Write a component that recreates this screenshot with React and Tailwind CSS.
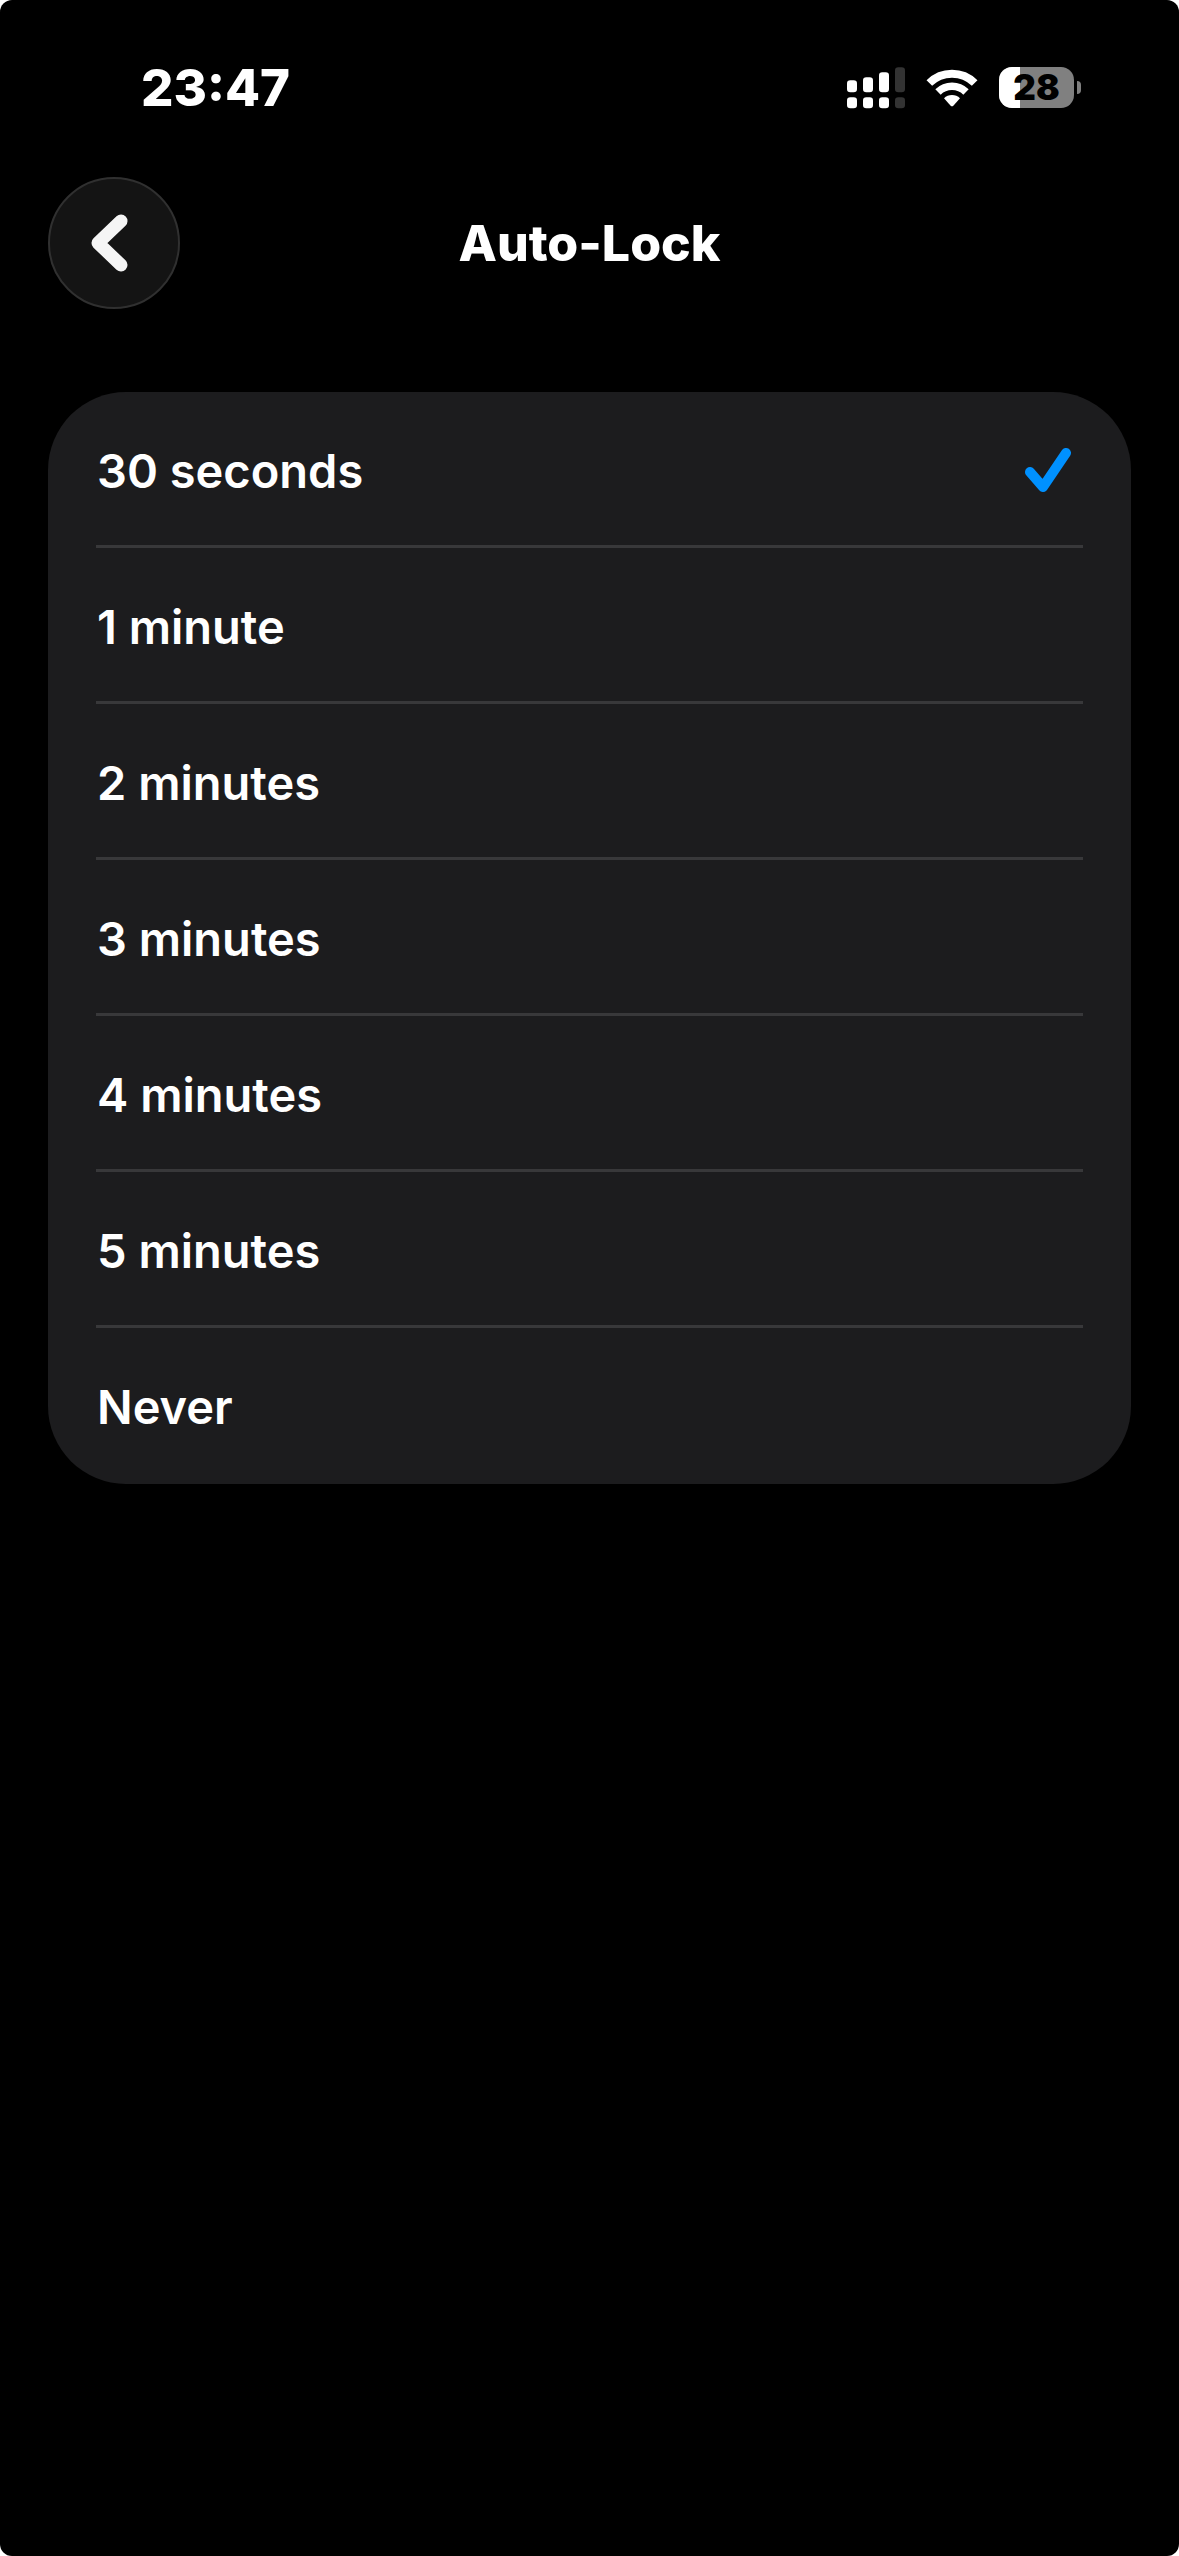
import { useState } from 'react';

const OPTIONS = ['30 seconds', '1 minute', '2 minutes', '3 minutes', '4 minutes', '5 minutes', 'Never'];

function SignalIcon() {
    return (
        <svg width="58" height="42" viewBox="0 0 174 126" aria-hidden="true">
            <g fill="#fff">
                <rect x="0" y="40" width="30" height="36" rx="10" />
                <rect x="48" y="31" width="30" height="45" rx="10" />
                <rect x="96" y="16" width="30" height="60" rx="10" />
                <rect x="0" y="91" width="30" height="33" rx="10" />
                <rect x="48" y="91" width="30" height="33" rx="10" />
                <rect x="96" y="91" width="30" height="33" rx="10" />
            </g>
            <g fill="#333">
                <rect x="144" y="1" width="30" height="75" rx="10" />
                <rect x="144" y="91" width="30" height="33" rx="10" />
            </g>
        </svg>
    );
}

function WifiIcon() {
    return (
        <svg width="52" height="38" viewBox="0 0 156 114" aria-hidden="true">
            <g fill="none" stroke="#fff">
                <path d="M10 42 A97 97 0 0 1 146 42" strokeWidth="24" />
                <path d="M36 69 A60 60 0 0 1 120 69" strokeWidth="23" />
            </g>
            <path d="M54 88 A34 34 0 0 1 102 88 L82 110 Q78 114 74 110 Z" fill="#fff" />
        </svg>
    );
}

function Battery({ level }) {
    return (
        <div className="flex items-center gap-[3px]">
            <div className="relative flex h-[41px] w-[75px] items-center justify-center overflow-hidden rounded-[13px] bg-[#808080]">
                <div className="absolute inset-y-0 left-0 bg-white" style={{ width: `${level}%` }} />
                <span className="relative text-[35px] leading-none font-black text-black">{level}</span>
            </div>
            <div className="h-[13px] w-1 rounded-r-full bg-[#808080]" />
        </div>
    );
}

function StatusBar() {
    return (
        <div className="flex h-[175px] items-center justify-between pr-[98px] pl-[141px]">
            <span className="text-[51px] leading-none font-extrabold">23:47</span>
            <div className="flex items-center gap-[21px]">
                <SignalIcon />
                <WifiIcon />
                <Battery level={28} />
            </div>
        </div>
    );
}

function Header() {
    return (
        <header className="mt-0.5 grid grid-cols-[132px_1fr_132px] items-center px-12">
            <button
                type="button"
                aria-label="Back"
                className="flex size-[132px] items-center justify-center rounded-full border-2 border-[#303030] bg-[#141414]"
            >
                <svg width="60" height="60" viewBox="0 0 60 60" fill="none" aria-hidden="true">
                    <path d="M37 8 L14 30 L37 52" stroke="#f5f5f5" strokeWidth="13" strokeLinecap="round" strokeLinejoin="round" />
                </svg>
            </button>
            <h1 className="text-center text-[50px] leading-none font-extrabold">Auto-Lock</h1>
        </header>
    );
}

export default function App() {
    const [selected, setSelected] = useState('30 seconds');

    return (
        <div className="bg-white">
            <div className="min-h-screen rounded-xl bg-black font-['Inter',sans-serif] text-white">
                <StatusBar />
                <Header />
                <main className="px-12 pt-[83px]">
                    <div role="radiogroup" aria-label="Auto-Lock" className="rounded-[78px] bg-[#1c1c1e] px-12">
                        {OPTIONS.map(option => (
                            <label
                                key={option}
                                className="relative flex h-[156px] items-center justify-between border-b-3 border-[#38383a] pt-[3px] pr-3 pl-px last:border-transparent"
                            >
                                <span className="text-[47px] leading-none font-semibold">{option}</span>
                                <input
                                    type="radio"
                                    name="auto-lock"
                                    value={option}
                                    checked={selected === option}
                                    onChange={() => setSelected(option)}
                                    className="absolute inset-0 size-full cursor-pointer appearance-none"
                                />
                                {selected === option && (
                                    <svg width="46" height="44" viewBox="0 0 46 44" fill="none" aria-hidden="true">
                                        <path d="M5 24 L18 39 L41 5" stroke="#0091ff" strokeWidth="10" strokeLinecap="round" strokeLinejoin="round" />
                                    </svg>
                                )}
                            </label>
                        ))}
                    </div>
                </main>
            </div>
        </div>
    );
}
